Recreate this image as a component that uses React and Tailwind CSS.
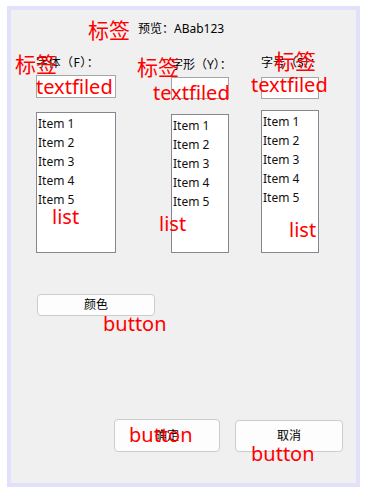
const ui = { fontFamily: '"Noto Sans", "Noto Sans CJK SC", sans-serif' }
const mark = { fontFamily: '"Noto Sans", "Noto Sans CJK SC", sans-serif' }

const items = ['Item 1', 'Item 2', 'Item 3', 'Item 4', 'Item 5']

// red design-tool annotations, laid over the form
const notes = [
  { text: '标签', left: 88, top: 14, size: 'text-[21px]' },
  { text: '标签', left: 15, top: 48, size: 'text-[21px]' },
  { text: '标签', left: 137, top: 51, size: 'text-[21px]' },
  { text: '标签', left: 274, top: 45, size: 'text-[21px]' },
  { text: 'textfiled', left: 36, top: 71, size: 'text-[20px]' },
  { text: 'textfiled', left: 153, top: 77, size: 'text-[20px]' },
  { text: 'textfiled', left: 251, top: 69, size: 'text-[20px]' },
  { text: 'list', left: 52, top: 201, size: 'text-[20px]' },
  { text: 'list', left: 159, top: 208, size: 'text-[20px]' },
  { text: 'list', left: 289, top: 214, size: 'text-[20px]' },
  { text: 'button', left: 103, top: 308, size: 'text-[20px]' },
  { text: 'button', left: 129, top: 419, size: 'text-[20px]' },
  { text: 'button', left: 251, top: 438, size: 'text-[20px]' },
]

function ItemList({ className }) {
  return (
    <div className={`border border-[#828790] bg-white pl-[1px] pt-[1px] ${className}`}>
      {items.map((it) => (
        <div key={it} className="h-[19px] text-[12px] leading-[19px] text-[#111]">
          {it}
        </div>
      ))}
    </div>
  )
}

function Button({ children, className }) {
  return (
    <button className={`flex items-center justify-center rounded-[4px] border border-[#cccccc] bg-[#fdfdfd] text-[12px] text-black ${className}`}>
      {children}
    </button>
  )
}

export default function App() {
  return (
    <div className="relative h-[503px] w-[383px] bg-white" style={ui}>
      <div className="ml-[7px] mt-[6px] h-[481px] w-[353px] border-4 border-[#e1e1fb] bg-[#f0f0f0]">
        {/* preview */}
        <div className="ml-[127px] mt-[11px] h-[16px] text-[12px] leading-[16px] text-black">
          预览：ABab123
        </div>

        {/* font / style / size columns */}
        <div className="mt-[18px] flex items-start">
          <div className="ml-[25px] flex w-[80px] flex-col">
            <div className="h-[16px] text-[12px] leading-[16px] whitespace-nowrap tracking-[0.5px]">字体（F）：</div>
            <div className="mt-[4px] h-[23px] border border-[#a5a5a5] bg-white" />
            <ItemList className="mt-[14px] h-[141px]" />
          </div>
          <div className="ml-[55px] mt-[2px] flex w-[58px] flex-col">
            <div className="h-[16px] text-[12px] leading-[16px] whitespace-nowrap">字形（Y）：</div>
            <div className="mt-[4px] h-[22px] border border-[#a5a5a5] bg-white" />
            <ItemList className="mt-[15px] h-[139px]" />
          </div>
          <div className="ml-[32px] flex w-[58px] flex-col">
            <div className="h-[16px] text-[12px] leading-[16px] whitespace-nowrap">字号（S）：</div>
            <div className="mt-[6px] h-[22px] border border-[#a5a5a5] bg-white" />
            <ItemList className="mt-[11px] h-[143px]" />
          </div>
        </div>

        <Button className="ml-[26px] mt-[41px] h-[22px] w-[118px]">颜色</Button>

        <div className="ml-[103px] mt-[103px] flex items-start gap-[15px]">
          <Button className="h-[33px] w-[106px]">确定</Button>
          <Button className="mt-[1px] h-[32px] w-[108px]">取消</Button>
        </div>
      </div>

      {notes.map((n, i) => (
        <div
          key={i}
          className={`absolute whitespace-nowrap leading-none text-[#ff0000] ${n.size}`}
          style={{ ...mark, left: n.left, top: n.top }}
        >
          {n.text}
        </div>
      ))}
    </div>
  )
}
